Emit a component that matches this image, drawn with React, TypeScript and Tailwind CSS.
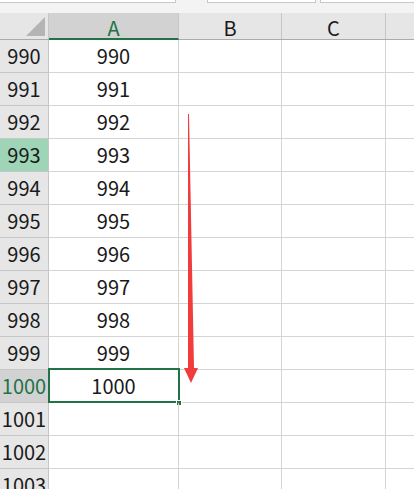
const rows = [990, 991, 992, 993, 994, 995, 996, 997, 998, 999, 1000, 1001, 1002, 1003];

const font = { fontFamily: '"Noto Sans CJK SC", "Noto Sans", sans-serif' };

export default function App() {
  return (
    <div className="relative w-[414px] h-[489px] overflow-hidden bg-white text-[20px] leading-none text-[#1a1a1a]" style={font}>
      {/* formula bar remnant */}
      <div className="flex h-[13px] bg-[#f3f3f3]">
        <div className="w-[176px] h-[3px] bg-white border-b border-r border-[#c8c8c8]" />
        <div className="w-[31px]" />
        <div className="w-[109px] h-[3px] bg-white border-b border-x border-[#c8c8c8]" />
        <div className="w-[4px]" />
        <div className="flex-1 h-[3px] bg-white border-b border-l border-[#c8c8c8]" />
      </div>

      {/* column headers */}
      <div className="flex h-[27px] bg-[#e6e6e6] border-b border-[#ababab]">
        <div className="w-[49px] shrink-0 border-r border-[#c6c6c6] flex items-end justify-end pr-[3px] pb-[3px]">
          <div className="w-0 h-0 border-l-[19px] border-l-transparent border-b-[19px] border-b-[#b4b4b4]" />
        </div>
        <div className="w-[130px] shrink-0 bg-[#d2d2d2] border-r border-[#c6c6c6] border-b-2 border-b-[#217346] -mb-px flex items-center justify-center text-[#217346] pt-[4px]">A</div>
        <div className="w-[103px] shrink-0 border-r border-[#c6c6c6] flex items-center justify-center pt-[4px]">B</div>
        <div className="w-[104px] shrink-0 border-r border-[#c6c6c6] flex items-center justify-center pt-[4px]">C</div>
        <div className="flex-1" />
      </div>

      {rows.map((n) => {
        const hl = n === 993;
        const sel = n === 1000;
        const hasVal = n <= 1000;
        return (
          <div key={n} className="flex h-[33px]">
            <div
              className={
                "w-[49px] shrink-0 border-r border-b border-[#c6c6c6] flex items-center justify-center " +
                (hl ? "bg-[#9fd5b7]" : sel ? "bg-[#d2d2d2] text-[#217346]" : "bg-[#e6e6e6]")
              }
            >
              {n}
            </div>
            <div className="relative w-[130px] shrink-0 border-r border-b border-[#d4d4d4] flex items-center justify-center">
              {hasVal ? n : ""}
              {sel && (
                <>
                  <div className="absolute -left-px -top-[2px] w-[132px] h-[35px] border-2 border-[#217346]" />
                  <div className="absolute -right-[4px] -bottom-[4px] w-[6px] h-[6px] bg-[#217346] border border-white" />
                </>
              )}
            </div>
            <div className="w-[103px] shrink-0 border-r border-b border-[#d4d4d4]" />
            <div className="w-[104px] shrink-0 border-r border-b border-[#d4d4d4]" />
            <div className="flex-1 border-b border-[#d4d4d4]" />
          </div>
        );
      })}

      {/* red arrow annotation */}
      <svg className="absolute left-0 top-0" width="414" height="489" viewBox="0 0 414 489">
        <polygon points="188,114 189,114 194,368 198,368 191,383 184,368 188,368" fill="#f03c3c" />
      </svg>
    </div>
  );
}
